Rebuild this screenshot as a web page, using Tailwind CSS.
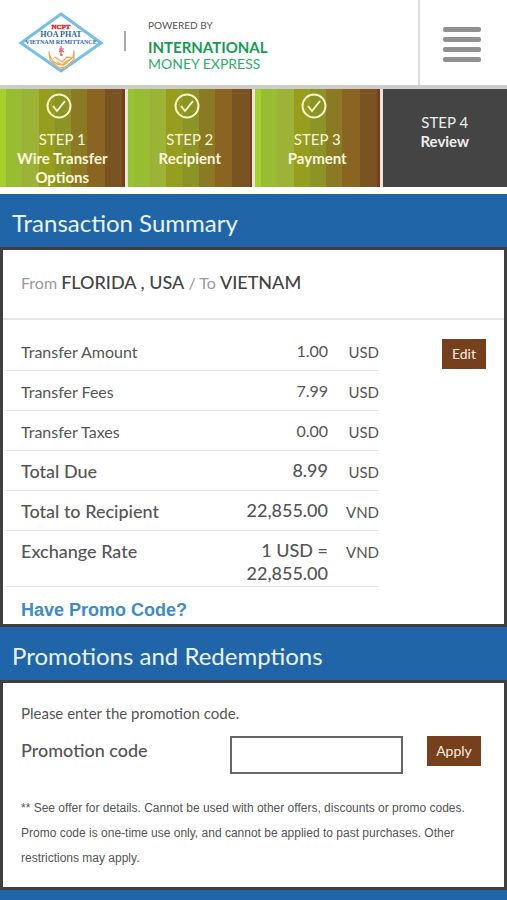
<!DOCTYPE html>
<html lang="en">
<head>
<meta charset="utf-8">
<meta name="viewport" content="width=device-width, initial-scale=1">
<title>Review transfer</title>
<script src="https://cdn.jsdelivr.net/npm/@tailwindcss/browser@4"></script>
</head>
<body class="bg-white font-['Lato',sans-serif] text-base text-[#555]">
<header class="flex h-[89px] border-b-4 border-[#ccc]">
  <div class="flex flex-1 items-start pl-[18px]">
    <svg class="mt-2.5 h-16 w-[86px] shrink-0" viewBox="0 0 86 64" role="img" aria-label="NCPT Hoa Phat Vietnam Remittance">
      <path d="M43 4 83 33 43 61 3 33Z" fill="#fff" stroke="#72bfe8" stroke-width="3"/>
      <g font-family="Liberation Serif, serif" font-weight="700" text-anchor="middle">
        <text x="43" y="19" font-size="7" fill="#d8232a" stroke="#d8232a" stroke-width=".4">NCPT</text>
        <text x="43" y="27" font-size="8" fill="#2e67a8">HOA PHAT</text>
        <text x="43" y="34" font-size="6" fill="#2e67a8">VIETNAM REMITTANCE</text>
      </g>
      <path d="M43 36v10M41 39h5M41 42l2-2 3 2M42 45h3" fill="none" stroke="#e05b5b" stroke-width="1.2"/>
      <path d="M31 42q1 8 8 12l7 1 9-8 1-6M31 42l1 8 9 8 8-1 7-8V41M37 47l7 5 5-5 5 1M39 52l5 3 6-5" fill="none" stroke="#efab5b" stroke-width="1.3" stroke-linecap="round" stroke-linejoin="round"/>
    </svg>
    <span class="mt-[31px] ml-5 h-5 w-0.5 bg-[#aaa]"></span>
    <div class="ml-[22px] pt-[18px]">
      <p class="text-[10px] leading-[14px] text-[#555]">POWERED BY</p>
      <p class="mt-1.5 text-[15px] leading-[18px] font-bold text-[#159b50]">INTERNATIONAL</p>
      <p class="text-sm leading-4 text-[#2aae6b]">MONEY EXPRESS</p>
    </div>
  </div>
  <button type="button" aria-label="Menu" class="flex w-[89px] items-center justify-center border-l-2 border-[#ddd] pt-1 pr-1">
    <svg class="h-9 w-[38px]" viewBox="0 0 38 36" fill="#919191"><rect y="0" width="38" height="5" rx="2"/><rect y="10" width="38" height="5" rx="2"/><rect y="20" width="38" height="5" rx="2"/><rect y="30" width="38" height="5" rx="2"/></svg>
  </button>
</header>

<ol class="grid grid-cols-4 gap-[3px] bg-[#e6e4e0] text-center text-[15px] leading-[19px] text-[#fbf6dc]">
  <li class="flex h-[98px] flex-col items-center bg-[linear-gradient(90deg,#a6d02a_0_5%,#98bd33_5%_18%,#9db337_18%_31%,#979e1d_31%_44%,#8b9424_44%_57%,#8a7a24_57%_70%,#8a6522_70%_84%,#795320_84%_98%,#7a3b20_98%)] pt-1">
    <svg class="mr-1.5 size-[26px]" viewBox="0 0 26 26" fill="none" stroke="#fbf2cd" stroke-width="2"><circle cx="13" cy="13" r="11.5"/><path d="m7 13 4 5 8-10"/></svg>
    <span class="mt-[11px]">STEP 1</span><strong>Wire Transfer Options</strong>
  </li>
  <li class="flex h-[98px] flex-col items-center bg-[linear-gradient(90deg,#96c532_0_5%,#98bd33_5%_18%,#9db337_18%_31%,#979e1d_31%_44%,#8b9424_44%_57%,#8a7a24_57%_70%,#8a6522_70%_84%,#795320_84%_98%,#7a3b20_98%)] pt-1">
    <svg class="mr-1.5 size-[26px]" viewBox="0 0 26 26" fill="none" stroke="#fbf2cd" stroke-width="2"><circle cx="13" cy="13" r="11.5"/><path d="m7 13 4 5 8-10"/></svg>
    <span class="mt-[11px]">STEP 2</span><strong>Recipient</strong>
  </li>
  <li class="flex h-[98px] flex-col items-center bg-[linear-gradient(90deg,#a6d02a_0_5%,#98bd33_5%_18%,#9db337_18%_31%,#979e1d_31%_44%,#8b9424_44%_57%,#8a7a24_57%_70%,#8a6522_70%_84%,#795320_84%_98%,#7a3b20_98%)] pt-1">
    <svg class="mr-1.5 size-[26px]" viewBox="0 0 26 26" fill="none" stroke="#fbf2cd" stroke-width="2"><circle cx="13" cy="13" r="11.5"/><path d="m7 13 4 5 8-10"/></svg>
    <span class="mt-[11px]">STEP 3</span><strong>Payment</strong>
  </li>
  <li class="flex h-[98px] flex-col items-center bg-[#444] pt-6 text-[#eee]" aria-current="step">
    <span>STEP 4</span><strong>Review</strong>
  </li>
</ol>

<main class="pt-[7px]">
  <section>
    <h2 class="bg-[#2165a9] px-3 pt-[13px] pb-2 text-2xl text-[#e9f3fc]">Transaction Summary</h2>
    <div class="border-[3px] border-[#3f3f3f]">
      <p class="border-b-2 border-[#e4e4e4] px-[18px] pt-5 pb-[23px] leading-6 text-[#999]">From <span class="text-lg leading-6 font-medium text-[#444]">FLORIDA , USA</span> / To <span class="text-lg leading-6 font-medium text-[#444]">VIETNAM</span></p>
      <div class="flex items-start justify-between pt-[11px] pr-[18px]">
        <table class="mr-[63px] ml-0.5 flex-1 border-collapse">
          <tbody class="text-right align-top leading-[23px] [&_td]:pt-2 [&_td]:pb-2 [&_th]:pt-[9px] [&_th]:pb-[7px] [&_th]:pl-4 [&_th]:text-left [&_tr]:border-b [&_tr]:border-[#e6e6e6]">
            <tr><th scope="row" class="w-1/2 font-normal">Transfer Amount</th><td>1.00</td><td class="w-[51px] pt-2.5! pb-1.5! text-[15px] leading-[23px]">USD</td></tr>
            <tr><th scope="row" class="font-normal">Transfer Fees</th><td>7.99</td><td class="pt-2.5! pb-1.5! text-[15px] leading-[23px]">USD</td></tr>
            <tr><th scope="row" class="font-normal">Transfer Taxes</th><td>0.00</td><td class="pt-2.5! pb-1.5! text-[15px] leading-[23px]">USD</td></tr>
            <tr><th scope="row" class="text-lg leading-[23px] font-medium">Total Due</th><td class="text-lg leading-[23px] font-medium">8.99</td><td class="pt-2.5! pb-1.5! text-[15px] leading-[23px]">USD</td></tr>
            <tr><th scope="row" class="text-lg leading-[23px] font-medium">Total to Recipient</th><td class="text-lg leading-[23px] font-medium">22,855.00</td><td class="pt-2.5! pb-1.5! text-[15px] leading-[23px]">VND</td></tr>
            <tr><th scope="row" class="text-lg leading-[23px] font-medium">Exchange Rate</th><td class="pb-px! text-lg leading-[23px] font-medium">1 USD =<br>22,855.00</td><td class="pt-2.5! pb-1.5! text-[15px] leading-[23px]">VND</td></tr>
          </tbody>
        </table>
        <button type="button" class="mt-2 h-[30px] w-11 bg-[#75401b] text-sm text-[#fdeee0]">Edit</button>
      </div>
      <p class="px-[18px] pt-[11px] pb-0.5"><a href="#promo" class="font-['Liberation_Sans',sans-serif] text-lg leading-6 font-bold text-[#3e8bcb]">Have Promo Code?</a></p>
    </div>
  </section>
  <section>
    <h2 class="bg-[#2165a9] px-3 pt-[13px] pb-2 text-2xl text-[#e9f3fc]">Promotions and Redemptions</h2>
    <div class="border-[3px] border-[#3f3f3f] px-[18px] pt-5 pb-4">
      <p class="text-[15px] leading-5">Please enter the promotion code.</p>
      <div class="mt-[13px] flex items-start">
        <label for="promo" class="flex-1 text-lg leading-7 font-medium">Promotion code</label>
        <input id="promo" type="text" class="h-[38px] w-[173px] border-2 border-[#666] px-2">
        <button type="button" class="mr-[5px] ml-6 h-[30px] w-[54px] bg-[#75401b] text-sm text-[#fdeee0]">Apply</button>
      </div>
      <p class="mt-[22px] font-['Liberation_Sans',sans-serif] text-xs leading-[25px]">** See offer for details. Cannot be used with other offers, discounts or promo codes. Promo code is one-time use only, and cannot be applied to past purchases. Other restrictions may apply.</p>
    </div>
  </section>
  <div class="h-4 bg-[#2165a9]"></div>
</main>
</body>
</html>
